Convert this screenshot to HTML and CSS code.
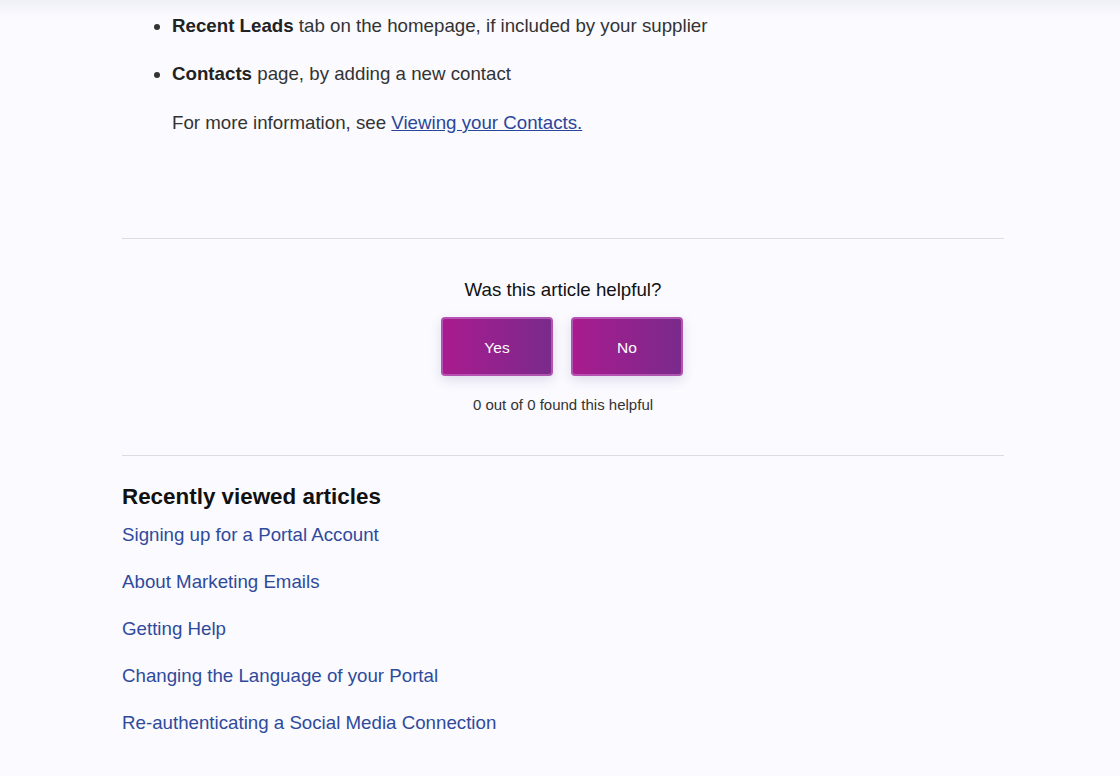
FILE: index.html
```html
<!DOCTYPE html>
<html lang="en">
<head>
<meta charset="utf-8">
<title>Article</title>
<link rel="stylesheet" href="styles.css">
</head>
<body>
<div class="top-shade"></div>
<main class="article">
  <ul class="bullets">
    <li><strong>Recent Leads</strong> tab on the homepage, if included by your supplier</li>
    <li><strong>Contacts</strong> page, by adding a new contact</li>
  </ul>
  <p class="more">For more information, see <a href="#">Viewing your Contacts.</a></p>

  <section class="vote">
    <h2 class="vote-title">Was this article helpful?</h2>
    <div class="vote-buttons">
      <button class="vote-btn">Yes</button>
      <button class="vote-btn">No</button>
    </div>
    <p class="vote-count">0 out of 0 found this helpful</p>
  </section>

  <section class="recent">
    <h3 class="recent-title">Recently viewed articles</h3>
    <ul class="recent-list">
      <li><a href="#">Signing up for a Portal Account</a></li>
      <li><a href="#">About Marketing Emails</a></li>
      <li><a href="#">Getting Help</a></li>
      <li><a href="#">Changing the Language of your Portal</a></li>
      <li><a href="#">Re-authenticating a Social Media Connection</a></li>
    </ul>
  </section>
</main>
</body>
</html>
```
FILE: styles.css
```css
html, body {
  margin: 0;
  padding: 0;
  background: #fafaff;
}
body {
  font-family: "Liberation Sans", Arial, sans-serif;
  color: #333;
}
.top-shade {
  position: fixed;
  top: 0;
  left: 0;
  right: 0;
  height: 16px;
  background: linear-gradient(to bottom, rgba(228,228,238,0.5), rgba(250,250,255,0));
  pointer-events: none;
}
.article {
  margin-left: 122px;
  width: 882px;
}
.bullets {
  margin: 0;
  padding: 12px 0 0 50px;
  font-size: 18.72px;
  line-height: 28px;
}
.bullets li {
  margin-bottom: 20px;
}
.bullets li:last-child {
  margin-bottom: 0;
}
.bullets strong {
  color: #222;
}
.more {
  margin: 21px 0 0 50px;
  font-size: 18.72px;
  line-height: 28px;
}
.more a {
  color: #2a4699;
  text-decoration: underline;
}
.vote {
  margin-top: 101px;
  border-top: 1px solid #dcdce2;
  border-bottom: 1px solid #dcdce2;
  padding: 37px 0 40px;
  text-align: center;
}
.vote-title {
  margin: 0;
  font-size: 18.72px;
  line-height: 28px;
  font-weight: normal;
  color: #111;
}
.vote-buttons {
  display: flex;
  justify-content: center;
  gap: 18px;
  margin-top: 13px;
  padding-right: 2px;
}
.vote-btn {
  width: 112px;
  height: 59px;
  padding: 2px 0 0;
  border: 2px solid rgba(190, 100, 190, 0.75);
  border-radius: 4px;
  background: linear-gradient(to right, #a91b8f, #7a2a8b);
  color: #fff;
  font-family: "Liberation Sans", Arial, sans-serif;
  font-size: 15.5px;
  box-shadow: 0 4px 12px rgba(90, 60, 130, 0.16);
  cursor: pointer;
}
.vote-count {
  margin: 18px 0 0;
  font-size: 15px;
  line-height: 21px;
  color: #333;
}
.recent {
  padding-top: 26px;
}
.recent-title {
  margin: 0;
  font-size: 22.4px;
  line-height: 30px;
  font-weight: bold;
  color: #111;
}
.recent-list {
  list-style: none;
  margin: 9px 0 0;
  padding: 0;
  font-size: 18.72px;
  line-height: 28px;
}
.recent-list li {
  margin-bottom: 19px;
}
.recent-list a {
  color: #2f4a9b;
  text-decoration: none;
}
```
